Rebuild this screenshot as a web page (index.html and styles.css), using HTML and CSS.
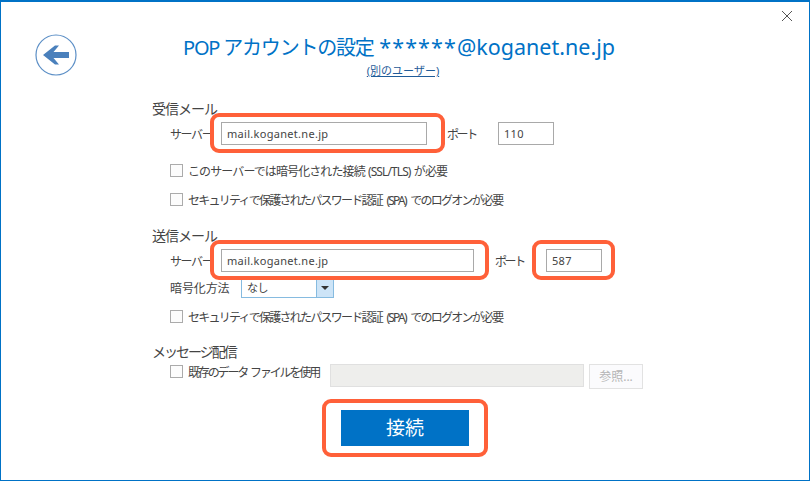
FILE: index.html
```html
<!doctype html>
<html>
<head>
    <meta charset="utf-8">
    <title>POP アカウントの設定</title>
    <link rel="stylesheet" href="styles.css">
</head>
<body>

<div class="window">
    <svg class="close" width="12" height="12" viewBox="0 0 12 12">
        <path d="M1 1L11 11M11 1L1 11" stroke="#555" stroke-width="1" fill="none"/>
    </svg>

    <div class="header">
        <svg class="back" width="42" height="42" viewBox="0 0 42 42">
            <circle cx="21" cy="21" r="20" fill="#fff" stroke="#5c8fc6" stroke-width="1.2"/>
            <path d="M8 21L20 11.5H24L18.500 18H34V24H18.500L24 30.500H20Z" fill="#4a80bc"/>
        </svg>
        <div class="heading">
            <div class="title"><span class="title-jp">POP アカウントの設定</span> <span class="title-stars">******</span>@koganet.ne.jp</div>
            <a class="other" href="#">(別のユーザー)</a>
        </div>
    </div>

    <div class="form">
        <div class="section">受信メール</div>
        <div class="row row-server">
            <span class="label">サーバー</span>
            <span class="field field-in">mail.koganet.ne.jp</span>
            <span class="port-label port-in">ポート</span>
            <span class="field field-port">110</span>
        </div>
        <div class="check check-first check-ssl"><i class="box"></i><span>このサーバーでは暗号化された接続 (SSL/TLS) が必要</span></div>
        <div class="check check-next"><i class="box"></i><span>セキュリティで保護されたパスワード認証 (SPA) でのログオンが必要</span></div>

        <div class="section section-out">送信メール</div>
        <div class="row row-server">
            <span class="label">サーバー</span>
            <span class="field field-out">mail.koganet.ne.jp</span>
            <span class="port-label port-out">ポート</span>
            <span class="field field-port">587</span>
        </div>
        <div class="row row-enc">
            <span class="label label-enc">暗号化方法</span>
            <span class="select"><span class="select-text">なし</span><span class="select-btn"></span></span>
        </div>
        <div class="check check-enc"><i class="box"></i><span>セキュリティで保護されたパスワード認証 (SPA) でのログオンが必要</span></div>

        <div class="section section-msg">メッセージ配信</div>
        <div class="row row-file">
            <div class="check"><i class="box"></i><span>既存のデータ ファイルを使用</span></div>
            <span class="file-path"></span>
            <span class="browse">参照...</span>
        </div>

        <div class="actions">
            <div class="connect">接続</div>
        </div>
    </div>

    <!-- 赤枠 -->
    <div class="mark mark-in"></div>
    <div class="mark mark-out"></div>
    <div class="mark mark-port"></div>
    <div class="mark mark-connect"></div>
</div>

</body>
</html>
```

FILE: styles.css
```css
* {
    margin: 0;
    padding: 0;
    box-sizing: border-box;
}

body {
    background: #fff;
    font-family: "Noto Sans", "Noto Sans CJK JP", sans-serif;
    color: #444;
    font-size: 12px;
    overflow: hidden;
}

.window {
    position: relative;
    width: 810px;
    height: 481px;
    border: 1px solid #0072c6;
    border-top-width: 2px;
    background: #fff;
}

.close {
    position: absolute;
    top: 8px;
    right: 16px;
}

/* header */
.header {
    display: flex;
    height: 98px;
    padding: 32px 0 0 34px;
}

.back {
    flex: none;
}

.heading {
    margin-left: 97px;
    width: 450px;
    text-align: center;
}

.title {
    color: #0072c6;
    font-size: 21.5px;
    line-height: 26px;
    white-space: nowrap;
}

.title-jp {
    font-size: 20px;
    letter-spacing: -1.2px;
}

.title-stars {
    letter-spacing: 1.1px;
}

.other {
    display: block;
    margin-top: 3px;
    color: #1f5c99;
    font-size: 11px;
    line-height: 14px;
    padding-left: 8px;
}

/* form */
.form {
    padding-left: 151px;
}

.section {
    height: 18px;
    line-height: 18px;
    font-size: 14px;
    letter-spacing: -1px;
}

.section-out {
    margin-top: 21px;
}

.section-msg {
    margin-top: 20px;
    letter-spacing: -2px;
}

.row {
    display: flex;
    align-items: center;
    margin-left: 18px;
}

.row-server {
    height: 23px;
    margin-top: 4px;
}

.label {
    width: 51px;
    flex: none;
    letter-spacing: -1.4px;
}

.field {
    display: block;
    height: 23px;
    line-height: 21px;
    border: 1px solid #a9a9a9;
    padding-left: 5px;
    background: #fff;
    font-size: 11px;
    letter-spacing: 0.3px;
}

.field-in {
    width: 206px;
}

.field-out {
    width: 253px;
}

.field-port {
    width: 56px;
}

.port-label {
    letter-spacing: -2.4px;
    flex: none;
    width: 31px;
    white-space: nowrap;
}

.port-in {
    margin: 0 20px;
}

.port-out {
    margin: 0 20px 0 21px;
}

.check {
    display: flex;
    align-items: center;
    height: 13px;
    margin-left: 18px;
    letter-spacing: -1.75px;
    word-spacing: 3px;
    white-space: nowrap;
}

.check-ssl {
    letter-spacing: -0.9px;
    word-spacing: 1px;
}

.box {
    display: block;
    flex: none;
    width: 13px;
    height: 13px;
    margin-right: 5px;
    border: 1px solid #ababab;
    background: #fcfcfc;
}

.check-first {
    margin-top: 19px;
}

.check-next {
    margin-top: 16px;
}

.row-enc {
    height: 19px;
    margin-top: 6px;
}

.label-enc {
    width: 71px;
    letter-spacing: -0.1px;
}

.select {
    display: flex;
    width: 93px;
    height: 20px;
    border: 1px solid #86bbe0;
}

.select-text {
    flex: 1;
    padding-left: 5px;
    line-height: 18px;
    font-size: 11px;
    letter-spacing: -0.5px;
}

.select-btn {
    position: relative;
    width: 17px;
    background: #cde4f7;
    border-left: 1px solid #86bbe0;
}

.select-btn::after {
    content: "";
    position: absolute;
    left: 4px;
    top: 7px;
    border: 4px solid transparent;
    border-top: 4px solid #333;
    border-bottom-width: 0;
}

.check-enc {
    margin-top: 13px;
}

.row-file {
    height: 25px;
    margin-top: 3px;
    align-items: flex-start;
}

.row-file .check {
    margin: 1px 0 0;
    width: 160px;
    letter-spacing: -2.15px;
    word-spacing: 2px;
}

.file-path {
    width: 254px;
    height: 23px;
    background: #eeeeec;
    border: 1px solid #e0e0e0;
}

.browse {
    width: 54px;
    height: 25px;
    margin-left: 5px;
    border: 1px solid #e2e2e2;
    background: #fbfbfd;
    color: #b5b5b5;
    text-align: center;
    line-height: 24px;
}

.actions {
    margin-top: 21px;
    padding-left: 189px;
}

.connect {
    width: 128px;
    height: 36px;
    background: #0072c6;
    color: #fff;
    font-size: 19px;
    line-height: 36px;
    text-align: center;
}

/* 赤枠 */
.mark {
    position: absolute;
    border: 4px solid #ff6039;
    border-radius: 9px;
}

.mark-in {
    left: 209px;
    top: 111px;
    width: 235px;
    height: 40px;
}

.mark-out {
    left: 209px;
    top: 238px;
    width: 279px;
    height: 40px;
}

.mark-port {
    left: 531px;
    top: 238px;
    width: 83px;
    height: 40px;
}

.mark-connect {
    left: 321px;
    top: 397px;
    width: 166px;
    height: 58px;
}
```
